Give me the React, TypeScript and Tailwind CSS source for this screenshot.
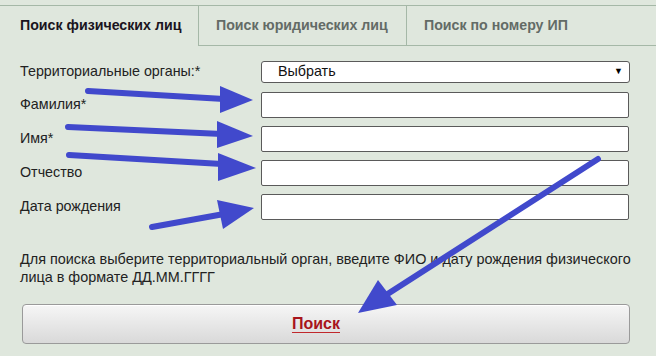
import React from "react";

const arrowColor = "#4149cc";

function Arrows() {
  return (
    <svg className="pointer-events-none absolute left-0 top-0" width="656" height="356" viewBox="0 0 656 356">
      <g stroke={arrowColor} strokeWidth="6" strokeLinecap="round" fill="none">
        <line x1="88" y1="91" x2="224" y2="99" />
        <line x1="68" y1="127" x2="222" y2="134" />
        <line x1="69" y1="155" x2="222" y2="164" />
        <line x1="152" y1="227" x2="224" y2="214" />
        <line x1="598" y1="159" x2="386" y2="295" />
      </g>
      <g fill={arrowColor}>
        <polygon points="220,86 253,100 220,113" />
        <polygon points="217,121 253,136 217,148" />
        <polygon points="218,153 256,168 218,181" />
        <polygon points="217,200 254,208 223,229" />
        <polygon points="378,280 358,313 397,305" />
      </g>
    </svg>
  );
}

function Field({ label }: { label: string }) {
  return (
    <div className="flex items-center">
      <div className="w-[241px] shrink-0 text-[14.3px] text-[#222]">{label}</div>
      <div className="h-[26px] w-[368px] rounded-[2px] border border-[#5a5a5a] bg-white" />
    </div>
  );
}

export default function App() {
  return (
    <div
      className="relative h-[356px] w-[656px] overflow-hidden bg-[#dfe7dd] pt-[5px]"
      style={{ fontFamily: '"Liberation Sans", Arial, sans-serif' }}
    >
      <div className="flex h-[41px] border-t border-[#a5b8a7]">
        <div className="flex w-[199px] items-center border-r border-[#a5b8a7] pl-[20px] text-[14.2px] font-bold text-[#1a1420]">
          Поиск физических лиц
        </div>
        <div className="flex w-[208px] items-center border-b border-r border-[#a5b8a7] pl-[17px] text-[14.2px] font-bold text-[#636b66]">
          Поиск юридических лиц
        </div>
        <div className="flex flex-1 items-center border-b border-[#a5b8a7] pl-[17px] text-[14.2px] font-bold text-[#636b66]">
          Поиск по номеру ИП
        </div>
      </div>

      <div className="pl-[20px] pt-[15px]">
        <div className="flex items-center">
          <div className="w-[241px] shrink-0 text-[14.3px] text-[#222]">Территориальные органы:*</div>
          <div className="flex h-[22px] w-[369px] items-center justify-between rounded-[3px] border border-[#5a5a5a] bg-white pl-[16px] pr-[6px] text-[14.3px] text-[#111]">
            <span>Выбрать</span>
            <span className="text-[9px] text-black">▼</span>
          </div>
        </div>
        <div className="mt-[9px] flex flex-col gap-[8px]">
          <Field label="Фамилия*" />
          <Field label="Имя*" />
          <Field label="Отчество" />
          <Field label="Дата рождения" />
        </div>
        <p className="mt-[30px] w-[625px] text-[14.4px] leading-[18px] text-[#222]">
          Для поиска выберите территориальный орган, введите ФИО и дату рождения физического лица в формате ДД.ММ.ГГГГ
        </p>
        <div className="ml-[2px] mt-[18px] flex h-[40px] w-[608px] items-center justify-center rounded-[4px] border border-[#9a9a9a] bg-gradient-to-b from-[#f6f6f6] to-[#d9d9d9] pr-[20px] shadow-[inset_0_1px_0_#fff]">
          <span className="text-[16px] font-bold text-[#a8141c] underline decoration-[#c0282c] underline-offset-[3px]">Поиск</span>
        </div>
      </div>
      <Arrows />
    </div>
  );
}
